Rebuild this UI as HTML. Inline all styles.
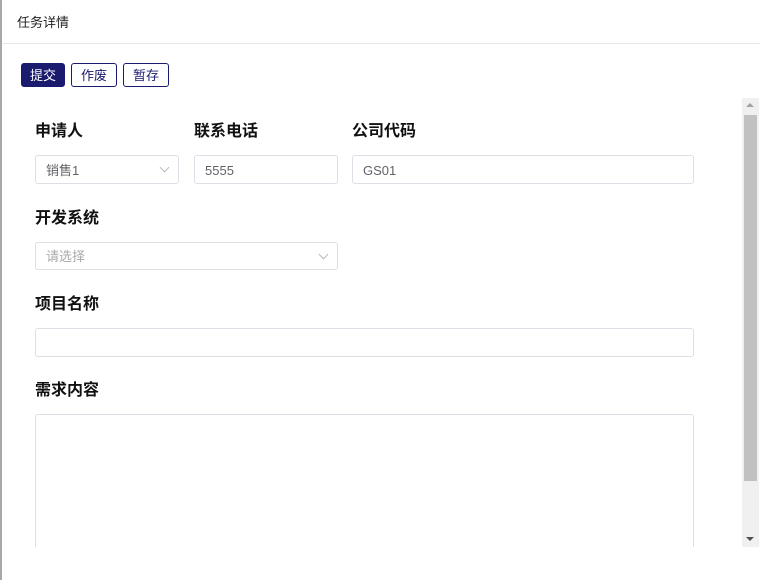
<!DOCTYPE html>
<html><head><meta charset="utf-8"><style>
*{box-sizing:border-box;margin:0;padding:0}
body{width:760px;height:580px;background:#fff;position:relative;overflow:hidden;font-family:"Liberation Sans","Noto Sans CJK SC",sans-serif}
.a{position:absolute}
.lbl{position:absolute;font-size:16px;font-weight:bold;color:#111}
.in{position:absolute;border:1px solid #dcdfe6;border-radius:3px;font-size:13px;color:#606266;padding-left:10px;line-height:29px}
.btn{position:absolute;top:63px;height:24px;border:1px solid #1a1a6e;border-radius:3px;font-size:13px;color:#1a1a6e;text-align:center;line-height:24px}
.chev{position:absolute;right:10px;top:8px;width:7px;height:7px;border-right:1px solid #bbb;border-bottom:1px solid #bbb;transform:rotate(45deg)}
</style></head><body>
<div class="a" style="left:0;top:0;width:2px;height:580px;background:#a8a8a8"></div>
<div class="a" style="left:17px;top:12px;font-size:13px;color:#222">任务详情</div>
<div class="a" style="left:3px;top:43px;width:757px;height:1px;background:#e8e8e8"></div>
<div class="btn" style="left:21px;width:44px;background:#1a1a6e;color:#fff">提交</div>
<div class="btn" style="left:71px;width:46px">作废</div>
<div class="btn" style="left:123px;width:46px">暂存</div>
<div class="lbl" style="left:35px;top:117px">申请人</div>
<div class="lbl" style="left:194px;top:117px">联系电话</div>
<div class="lbl" style="left:352px;top:117px">公司代码</div>
<div class="in" style="left:35px;top:155px;width:144px;height:29px">销售1<span class="chev"></span></div>
<div class="in" style="left:194px;top:155px;width:144px;height:29px">5555</div>
<div class="in" style="left:352px;top:155px;width:342px;height:29px">GS01</div>
<div class="lbl" style="left:35px;top:204px">开发系统</div>
<div class="in" style="left:35px;top:242px;width:303px;height:28px;color:#aaa;line-height:27px">请选择<span class="chev"></span></div>
<div class="lbl" style="left:35px;top:290px">项目名称</div>
<div class="in" style="left:35px;top:328px;width:659px;height:29px"></div>
<div class="lbl" style="left:35px;top:376px">需求内容</div>
<div class="a" style="left:35px;top:414px;width:659px;height:140px;border:1px solid #dcdfe6;border-radius:3px"></div>
<div class="a" style="left:0;top:547px;width:760px;height:33px;background:#fff"></div>
<div class="a" style="left:0;top:547px;width:2px;height:33px;background:#a8a8a8"></div>
<div class="a" style="left:742px;top:98px;width:17px;height:449px;background:#f0f0f0"></div>
<div class="a" style="left:744px;top:115px;width:13px;height:366px;background:#c1c1c1"></div>
<div class="a" style="left:746px;top:103px;width:0;height:0;border-left:4px solid transparent;border-right:4px solid transparent;border-bottom:4px solid #a3a3a3"></div>
<div class="a" style="left:746px;top:537px;width:0;height:0;border-left:4px solid transparent;border-right:4px solid transparent;border-top:4px solid #505050"></div>
</body></html>
